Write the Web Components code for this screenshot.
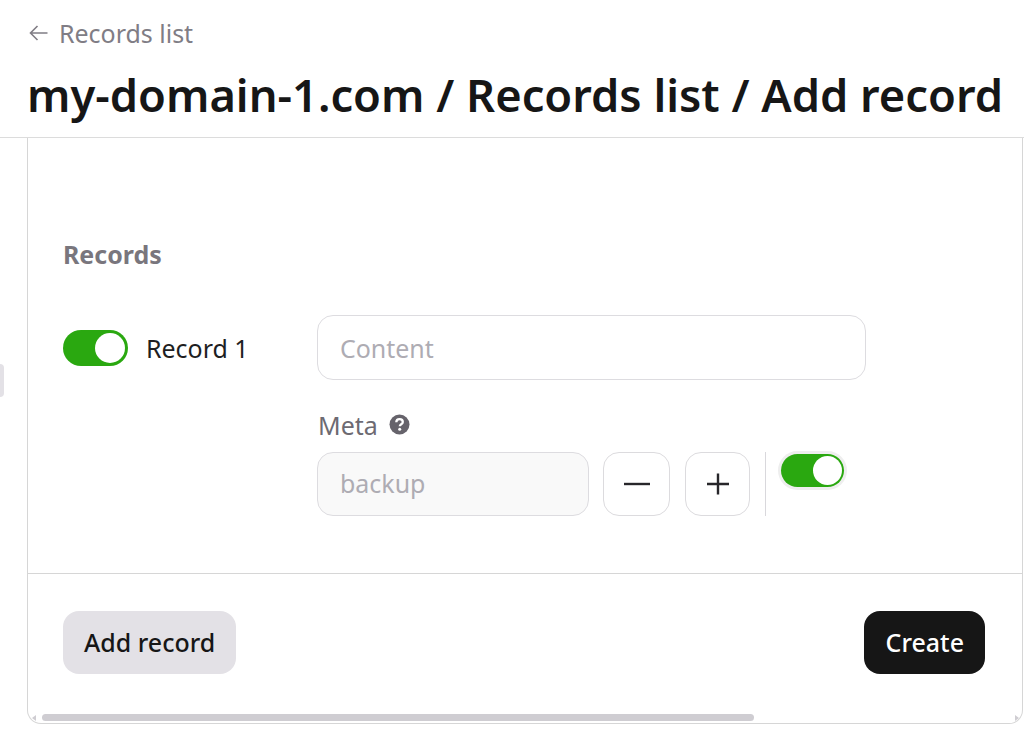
<!DOCTYPE html>
<html>
<head>
<meta charset="utf-8">
<title>Add record</title>
<style>
  html, body { margin: 0; height: 100%; background: #fff; overflow: hidden; }
  body { font-family: "Noto Sans", sans-serif; color: #161616; }
</style>
</head>
<body>
<page-header back="Records list" title-text="my-domain-1.com / Records list / Add record"></page-header>
<side-handle></side-handle>
<form-card>
  <section-title>Records</section-title>
  <record-row label="Record 1" placeholder="Content" meta="Meta" value="backup"></record-row>
  <ui-button slot="footer">Add record</ui-button>
  <ui-button slot="footer" kind="primary">Create</ui-button>
</form-card>

<script>
class PageHeader extends HTMLElement {
  constructor () {
    super()
    this.shadow = this.attachShadow({ mode: 'open' })
  }

  connectedCallback () {
    this.shadow.innerHTML = /* html */`
      <style>
        :host {
          display: block;
          height: 137px;
          box-sizing: content-box;
          border-bottom: 1px solid #dcdcdc;
          padding-left: 27px;
        }
        .back {
          display: flex;
          align-items: center;
          gap: 11px;
          height: 34px;
          padding-top: 16px;
          padding-left: 2px;
          color: #807d85;
          font-size: 24.96px;
        }
        svg { display: block; }
        h1 {
          margin: 0;
          margin-top: 15px;
          font-size: 45.25px;
          line-height: 60px;
          font-weight: 600;
          color: #161616;
          white-space: nowrap;
        }
      </style>
      <div class="back">
        <svg width="19" height="16" viewBox="0 0 19 16" fill="none" stroke="#807d85" stroke-width="1.6">
          <path d="M18.5 8H1.5M8.5 1L1.5 8l7 7"/>
        </svg>
        <span>${this.getAttribute('back')}</span>
      </div>
      <h1>${this.getAttribute('title-text')}</h1>
    `
  }
}

class SideHandle extends HTMLElement {
  constructor () {
    super()
    this.shadow = this.attachShadow({ mode: 'open' })
    this.shadow.innerHTML = /* html */`
      <style>
        :host {
          position: absolute;
          left: 0;
          top: 364px;
          width: 4px;
          height: 33px;
          background: #e3e1e6;
          border-radius: 0 4px 4px 0;
        }
      </style>
    `
  }
}

class FormCard extends HTMLElement {
  constructor () {
    super()
    this.shadow = this.attachShadow({ mode: 'open' })
    this.shadow.innerHTML = /* html */`
      <style>
        :host {
          display: flex;
          flex-direction: column;
          box-sizing: border-box;
          position: relative;
          margin-left: 27px;
          margin-right: 1px;
          height: 586px;
          border: 1px solid #d6d6d6;
          border-top: none;
          border-radius: 0 0 14px 14px;
        }
        .body {
          height: 436px;
          box-sizing: border-box;
          padding: 98px 35px 0;
          border-bottom: 1px solid #d6d6d6;
        }
        .footer {
          display: flex;
          justify-content: space-between;
          padding: 37px 37px 0 35px;
        }
        .scroll {
          position: absolute;
          left: 0;
          right: 0;
          bottom: 2px;
          height: 8px;
        }
        .thumb {
          position: absolute;
          left: 14px;
          width: 712px;
          top: 1px;
          height: 7px;
          border-radius: 4px;
          background: #cfcdd2;
        }
        .arrow {
          position: absolute;
          top: 2px;
          width: 0;
          height: 0;
          border-top: 3px solid transparent;
          border-bottom: 3px solid transparent;
        }
        .arrow.left { left: 4px; border-right: 4px solid #cfcdd2; }
        .arrow.right { right: 3px; border-left: 4px solid #cfcdd2; }
      </style>
      <div class="body"><slot></slot></div>
      <div class="footer"><slot name="footer"></slot></div>
      <div class="scroll">
        <span class="arrow left"></span>
        <span class="thumb"></span>
        <span class="arrow right"></span>
      </div>
    `
  }
}

class SectionTitle extends HTMLElement {
  constructor () {
    super()
    this.shadow = this.attachShadow({ mode: 'open' })
    this.shadow.innerHTML = /* html */`
      <style>
        :host {
          display: block;
          font-size: 24.96px;
          line-height: 36px;
          font-weight: 700;
          color: #79767d;
        }
      </style>
      <slot></slot>
    `
  }
}

class ToggleSwitch extends HTMLElement {
  constructor () {
    super()
    this.shadow = this.attachShadow({ mode: 'open' })
    this.shadow.innerHTML = /* html */`
      <style>
        :host {
          display: block;
          position: relative;
          flex: none;
          box-sizing: border-box;
          width: 65px;
          height: 36px;
          border-radius: 18px;
          background: #2aa810;
        }
        :host([focused]) {
          width: 63px;
          height: 33px;
          box-shadow: 0 0 0 3px #eeeeee;
        }
        .knob {
          position: absolute;
          top: 3px;
          right: 3px;
          bottom: 3px;
          aspect-ratio: 1;
          border-radius: 50%;
          background: #fff;
        }
        :host([focused]) .knob { top: 2px; right: 2px; bottom: 2px; }
      </style>
      <span class="knob"></span>
    `
  }
}

class TextField extends HTMLElement {
  constructor () {
    super()
    this.shadow = this.attachShadow({ mode: 'open' })
    this.shadow.innerHTML = /* html */`
      <style>
        :host {
          display: flex;
          align-items: center;
          box-sizing: border-box;
          height: 65px;
          padding: 0 22px;
          border: 1px solid #dddce0;
          border-radius: 16px;
          background: #fff;
          color: #aeacb3;
          font-size: 24.96px;
        }
        :host([disabled]) { background: #f9f9f9; padding-bottom: 2px; }
      </style>
      <slot></slot>
    `
  }
}

class IconButton extends HTMLElement {
  constructor () {
    super()
    this.shadow = this.attachShadow({ mode: 'open' })
  }

  connectedCallback () {
    const plus = this.getAttribute('icon') === 'plus'
    this.shadow.innerHTML = /* html */`
      <style>
        :host {
          display: flex;
          align-items: center;
          justify-content: center;
          flex: none;
          box-sizing: border-box;
          width: ${plus ? 65 : 67}px;
          height: 64px;
          border: 1px solid #dcdbde;
          border-radius: 16px;
          background: #fff;
        }
        svg { display: block; }
      </style>
      <svg width="26" height="24" viewBox="0 0 26 24" fill="none" stroke="#27262a" stroke-width="2.4">
        ${plus ? '<path d="M2 12h22M13 1.500v21"/>' : '<path d="M0 12h26"/>'}
      </svg>
    `
  }
}

class RecordRow extends HTMLElement {
  constructor () {
    super()
    this.shadow = this.attachShadow({ mode: 'open' })
  }

  connectedCallback () {
    this.shadow.innerHTML = /* html */`
      <style>
        :host {
          display: grid;
          grid-template-columns: 254px 549px;
          margin-top: 43px;
        }
        .lead {
          display: flex;
          align-items: center;
          gap: 18px;
          height: 65px;
          color: #1e1e22;
          font-size: 24.96px;
        }
        .meta-label {
          display: flex;
          align-items: center;
          gap: 11px;
          height: 36px;
          margin-top: 27px;
          margin-bottom: 9px;
          margin-left: 1px;
          color: #6d6a72;
          font-size: 24.96px;
        }
        .meta-label svg { display: block; margin-top: -1px; }
        .controls {
          display: flex;
          align-items: flex-start;
        }
        .controls text-field { width: 272px; height: 64px; }
        .minus { margin-left: 14px; }
        .plus { margin-left: 15px; }
        .divider {
          width: 1px;
          height: 64px;
          margin-left: 15px;
          background: #d9d8dc;
        }
        .controls toggle-switch { margin: 2px 0 0 15px; }
      </style>
      <div class="lead">
        <toggle-switch></toggle-switch>
        <span>${this.getAttribute('label')}</span>
      </div>
      <div class="fields">
        <text-field>${this.getAttribute('placeholder')}</text-field>
        <div class="meta-label">
          <span>${this.getAttribute('meta')}</span>
          <svg width="21" height="21" viewBox="0 0 21 21">
            <circle cx="10.500" cy="10.500" r="10" fill="#66636b"/>
            <path d="M7.300 8.200c0-2 1.400-3.100 3.300-3.100s3.200 1.100 3.200 2.800c0 2.400-3 2.300-3 4.400" fill="none" stroke="#fff" stroke-width="2.300"/>
            <circle cx="10.700" cy="15.300" r="1.500" fill="#fff"/>
          </svg>
        </div>
        <div class="controls">
          <text-field disabled>${this.getAttribute('value')}</text-field>
          <icon-button class="minus" icon="minus"></icon-button>
          <icon-button class="plus" icon="plus"></icon-button>
          <span class="divider"></span>
          <toggle-switch focused></toggle-switch>
        </div>
      </div>
    `
  }
}

class UiButton extends HTMLElement {
  constructor () {
    super()
    this.shadow = this.attachShadow({ mode: 'open' })
    this.shadow.innerHTML = /* html */`
      <style>
        :host {
          display: flex;
          align-items: center;
          box-sizing: border-box;
          height: 63px;
          padding: 0 21px 2px;
          border-radius: 16px;
          background: #e3e1e6;
          color: #161616;
          font-size: 24.96px;
          font-weight: 500;
        }
        :host([kind="primary"]) {
          background: #161616;
          color: #fff;
          padding: 0 21px 2px 21.500px;
        }
      </style>
      <slot></slot>
    `
  }
}

customElements.define('page-header', PageHeader)
customElements.define('side-handle', SideHandle)
customElements.define('form-card', FormCard)
customElements.define('section-title', SectionTitle)
customElements.define('toggle-switch', ToggleSwitch)
customElements.define('text-field', TextField)
customElements.define('icon-button', IconButton)
customElements.define('record-row', RecordRow)
customElements.define('ui-button', UiButton)
</script>
</body>
</html>
